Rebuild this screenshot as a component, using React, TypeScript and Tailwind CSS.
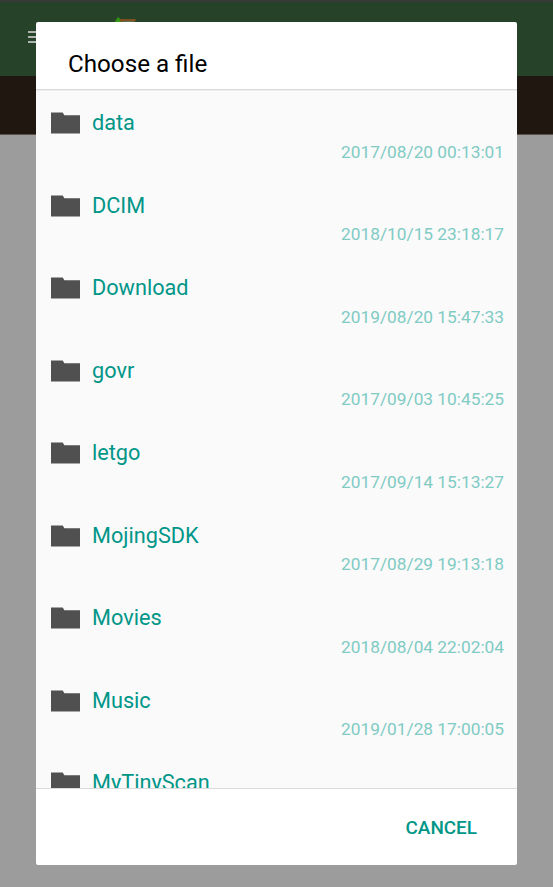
const files = [
  { name: "data", date: "2017/08/20 00:13:01" },
  { name: "DCIM", date: "2018/10/15 23:18:17" },
  { name: "Download", date: "2019/08/20 15:47:33" },
  { name: "govr", date: "2017/09/03 10:45:25" },
  { name: "letgo", date: "2017/09/14 15:13:27" },
  { name: "MojingSDK", date: "2017/08/29 19:13:18" },
  { name: "Movies", date: "2018/08/04 22:02:04" },
  { name: "Music", date: "2019/01/28 17:00:05" },
  { name: "MyTinyScan", date: "" },
];

function FolderIcon() {
  return (
    <svg className="h-[22px] w-[29px] shrink-0" viewBox="0 0 29 22" fill="#505050">
      <path d="M0 0.4H11.7L13.4 3.2H29V21.6H0Z" />
    </svg>
  );
}

function FileRow({ name, date }: { name: string; date: string }) {
  return (
    <li className="h-[82.44px] shrink-0 pl-[15px] pr-[13px] pt-[18.45px]">
      <div className="flex h-7 items-center gap-3">
        <FolderIcon />
        <span className="text-[21.7px] leading-7 text-[#009688]">{name}</span>
      </div>
      <div className="mt-[2.6px] text-right text-[17.3px] leading-6 text-[#80cbc4]">{date}</div>
    </li>
  );
}

export default function App() {
  return (
    <div className="relative h-[887px] w-[553px] overflow-hidden bg-[#9c9c9c] font-[Roboto,sans-serif]">
      <div className="h-[76px] border-t-2 border-[#373b38] bg-[#264228] pl-7 pt-[29px]">
        <div className="flex w-6 flex-col gap-[3px]">
          <div className="h-[2px] bg-[#b0b4b0]" />
          <div className="h-[2px] bg-[#b0b4b0]" />
          <div className="h-[2px] bg-[#b0b4b0]" />
        </div>
      </div>
      <div className="h-[59px] border-b border-[#5b5148] bg-[#201711]" />
      <svg className="absolute left-[114px] top-[16px] h-[8px] w-[24px]" viewBox="0 0 24 8">
        <path d="M0 7L4 1L7 4V8H0Z" fill="#329812" />
        <path d="M6 3H22L20 8H7Z" fill="#805020" />
        <path d="M9 5H19V8H9Z" fill="#5c7355" />
      </svg>

      <section className="absolute left-9 top-[22px] flex h-[843px] w-[481px] flex-col overflow-hidden rounded-[2px] bg-white">
        <header className="flex h-[68px] shrink-0 items-center border-b border-[#dadada] pl-8 pt-[17px]">
          <h1 className="text-[24.2px] leading-8 text-black">Choose a file</h1>
        </header>
        <ul className="flex h-[698px] shrink-0 flex-col overflow-hidden border-t border-[#eeeeee] bg-[#fafafa]">
          {files.map((file) => (
            <FileRow key={file.name} {...file} />
          ))}
        </ul>
        <footer className="flex flex-1 items-center justify-end border-t border-[#dadada] pr-10 pt-[2px]">
          <button className="text-[18.9px] font-medium leading-6 text-[#009688]">CANCEL</button>
        </footer>
      </section>
    </div>
  );
}
